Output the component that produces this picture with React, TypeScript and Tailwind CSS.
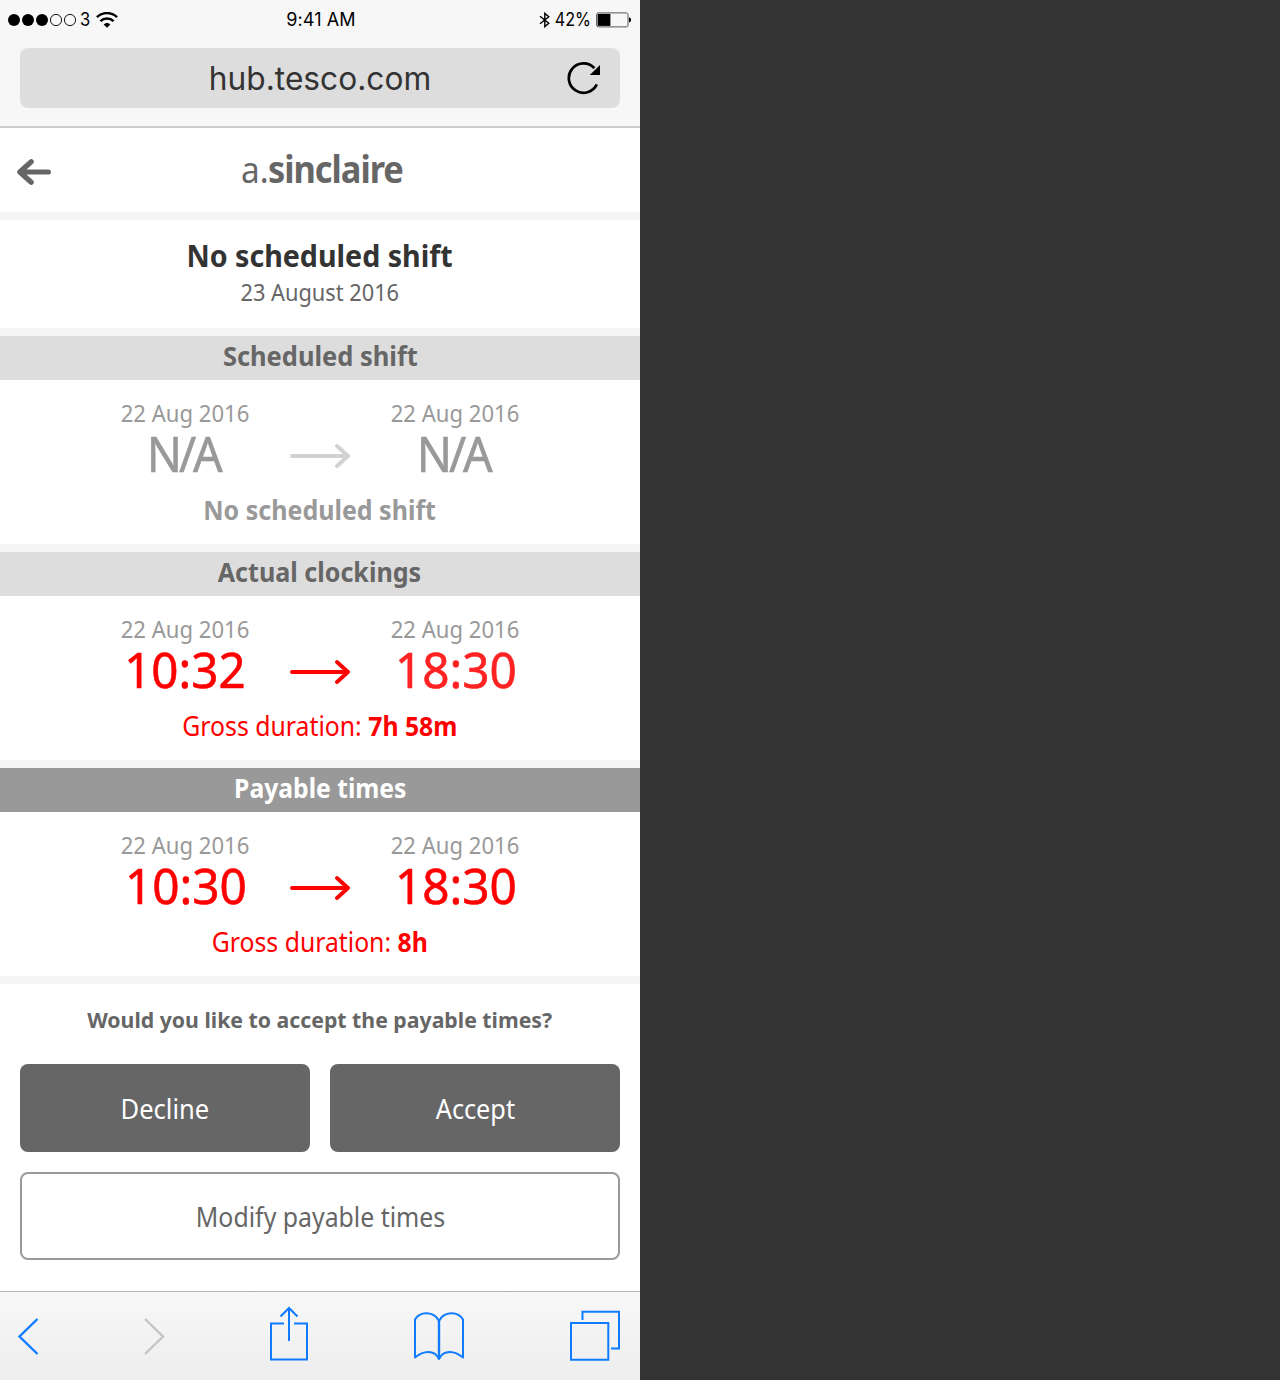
import type { ReactNode } from "react";

const NOTO = "font-['Noto_Sans',sans-serif]";

function Fit({ className, children }: { className: string; children: ReactNode }) {
  return <span className={`inline-block whitespace-pre ${className}`}>{children}</span>;
}

function StatusBar() {
  return (
    <div className="flex h-10 items-center justify-between pr-2 pl-2 font-[Inter,sans-serif] text-[18px] leading-10 text-black">
      <div className="flex w-[200px] items-center">
        <svg width="69" height="14" viewBox="0 0 69 14">
          <circle cx="6" cy="7" r="6" />
          <circle cx="20" cy="7" r="6" />
          <circle cx="34" cy="7" r="6" />
          <circle cx="48" cy="7" r="5.6" fill="none" stroke="#000" strokeWidth="0.9" />
          <circle cx="62" cy="7" r="5.6" fill="none" stroke="#000" strokeWidth="0.9" />
        </svg>
        <Fit className="ml-[3px] w-[11px] origin-left scale-x-[0.92]">3</Fit>
        <svg className="ml-[5px]" width="22" height="16" viewBox="0 0 22 16" fill="none" stroke="#000">
          <path d="M0.9 5.2C6.5 -0.3 15.5 -0.3 21.1 5.2" strokeWidth="2.5" />
          <path d="M4.4 9.2C8.2 5.5 13.8 5.5 17.6 9.2" strokeWidth="2.4" />
          <path d="M11 15.8L7.6 12.6C9.5 10.5 12.5 10.5 14.4 12.6Z" fill="#000" stroke="none" />
        </svg>
      </div>
      <Fit className="pl-[2px] tracking-[0.1px]">9:41 AM</Fit>
      <div className="flex w-[200px] items-center justify-end">
        <svg width="11" height="16" viewBox="0 0 11 16" fill="none" stroke="#000" strokeWidth="1.4">
          <path d="M1 4.2L9.8 11.2L5.8 14.6V1.4L9.8 4.8L1 11.8" />
        </svg>
        <Fit className="ml-[4px] w-[42px] origin-left scale-x-[0.9]">42%</Fit>
        <svg width="36" height="16" viewBox="0 0 36 16">
          <rect x="0.6" y="0.9" width="31.4" height="14" rx="1.8" fill="none" stroke="#444" strokeWidth="0.9" />
          <rect x="1.6" y="1.9" width="12.8" height="12" />
          <path d="M33 5.3C35.8 6 35.8 9.8 33 10.5Z" />
        </svg>
      </div>
    </div>
  );
}

function Browser() {
  return (
    <div className="h-32 border-b-2 border-[#ccc] bg-[#f7f7f7]">
      <StatusBar />
      <div className="mx-5 mt-2 grid h-[60px] grid-cols-[80px_1fr_80px] items-center rounded-lg bg-[#ddd]">
        <span />
        <Fit className="scale-x-[0.99] pt-[2px] text-center font-[Inter,sans-serif] text-[32px] leading-[58px] text-[#333]">hub.tesco.com</Fit>
        <svg className="ml-[27px]" width="34" height="34" viewBox="0 0 34 34" fill="none">
          <path d="M29.8 23.4A14.7 14.7 0 1 1 27.4 7.2" stroke="#000" strokeWidth="2.7" />
          <path d="M33 4V14H22.8Z" fill="#000" />
        </svg>
      </div>
    </div>
  );
}

function Arrow({ className }: { className: string }) {
  return (
    <svg className={className} width="60" height="26" viewBox="0 0 60 26" fill="none" stroke="currentColor" strokeWidth="3.8" strokeLinecap="round" strokeLinejoin="round">
      <path d="M2 13H58M47 3L58 13L47 23" />
    </svg>
  );
}

function Time({ value, className }: { value: string; className: string }) {
  return (
    <div className="flex flex-col items-center">
      <Fit className="scale-x-[0.96] text-[23px] leading-6 text-[#999]">22 Aug 2016</Fit>
      <Fit className={`mt-[3px] text-[50px] leading-[50px] [-webkit-text-stroke:0.6px_currentColor] ${className}`}>{value}</Fit>
    </div>
  );
}

interface SectionProps {
  title: ReactNode;
  header: string;
  start: string;
  end: string;
  startClass: string;
  endClass: string;
  arrowClass: string;
  children: ReactNode;
}

function Section(p: SectionProps) {
  return (
    <section className="flex h-[216px] flex-col items-center border-b-8 border-[#f5f5f5]">
      <h2 className={`flex h-11 w-full justify-center text-[27px] leading-[40px] font-bold ${p.header}`}>{p.title}</h2>
      <div className="mt-[21px] grid grid-cols-[150px_120px_150px]">
        <Time value={p.start} className={p.startClass} />
        <Arrow className={`mt-[42px] justify-self-center ${p.arrowClass}`} />
        <Time value={p.end} className={p.endClass} />
      </div>
      <div className="mt-[14px] text-[27px] leading-[36px]">{p.children}</div>
    </section>
  );
}

function Toolbar() {
  return (
    <nav className="flex h-[89px] items-start justify-between border-t border-[#b2b2b2] bg-gradient-to-b from-[#f8f8f8] to-[#ededed] pr-[18px] pl-[17px] pt-[14px] text-[#0f7cff]">
      <svg width="22" height="60" viewBox="0 0 22 60" fill="none" stroke="currentColor" strokeWidth="2.4">
        <path d="M20.5 13L2.5 30.5L20.5 48" />
      </svg>
      <svg width="22" height="60" viewBox="0 0 22 60" fill="none" stroke="#c4c4c4" strokeWidth="2.4">
        <path d="M1 13L19 30.5L1 48" />
      </svg>
      <svg className="-ml-[2px]" width="40" height="60" viewBox="0 0 40 60" fill="none" stroke="currentColor" strokeWidth="2">
        <path d="M15 17.5H2V53.5H38V17.5H25" />
        <path d="M20 35V3M11.5 10.5L20 2L28.5 10.5" />
      </svg>
      <svg className="-ml-[1px]" width="52" height="60" viewBox="0 0 52 60" fill="none" stroke="currentColor" strokeWidth="2" strokeLinejoin="round">
        <path d="M26 15C21 5 7 5 2 13.5V51.5C10 45 21 43 26 53C31 43 42 45 50 51.5V13.5C45 5 31 5 26 15Z" />
        <path d="M26 15V53" strokeWidth="2.4" />
      </svg>
      <svg width="52" height="60" viewBox="0 0 52 60" fill="none" stroke="currentColor" strokeWidth="2">
        <path d="M1 17H38.3V53.8H1Z" />
        <path d="M12.5 14V5.7H49V42.5H41" />
      </svg>
    </nav>
  );
}

export default function App() {
  return (
    <div className="h-[1380px] w-full bg-[#333]">
      <div className={`w-[640px] bg-white text-center ${NOTO}`}>
        <Browser />
        <header className="grid h-[92px] grid-cols-[80px_1fr_80px] border-b-8 border-[#f5f5f5] text-[#666]">
          <svg className="mt-[30px] ml-4" width="36" height="28" viewBox="0 0 36 28" fill="none" stroke="currentColor" strokeWidth="5.2" strokeLinecap="round" strokeLinejoin="round">
            <path d="M32.4 14H4M15.2 3.8L3.8 14L15.2 24.2" />
          </svg>
          <h1 className="flex justify-center pl-[4px] text-[37px] leading-[82px]">
            <Fit className="w-[27px] origin-left scale-x-[0.9]">a.</Fit>
            <Fit className="w-[135px] origin-left scale-x-[0.93] font-bold tracking-[-1.1px]">sinclaire</Fit>
          </h1>
        </header>
        <div className="flex h-[116px] flex-col items-center border-b-8 border-[#f5f5f5] pt-4">
          <Fit className="scale-x-[0.954] text-[30px] leading-[39px] font-bold text-[#333]">No scheduled shift</Fit>
          <Fit className="mt-[4px] scale-x-[0.947] text-[23px] leading-[26px] text-[#666]">23 August 2016</Fit>
        </div>
        <Section
          title={<Fit className="scale-x-[0.943]">Scheduled shift</Fit>}
          header="bg-[#ddd] text-[#666]"
          start="N/A"
          end="N/A"
          startClass="mr-[3px] text-[#999] tracking-[-3.4px] scale-x-[0.93]"
          endClass="mr-[3px] text-[#999] tracking-[-3.4px] scale-x-[0.93]"
          arrowClass="text-[#d2d2d2]"
        >
          <Fit className="scale-x-[0.926] font-bold text-[#999]">No scheduled shift</Fit>
        </Section>
        <Section
          title={<Fit className="mr-[1px] scale-x-[0.93]">Actual clockings</Fit>}
          header="bg-[#ddd] text-[#666]"
          start="10:32"
          end="18:30"
          startClass="text-[#f00] scale-x-[0.95]"
          endClass="ml-[2px] text-[#ff2222] scale-x-[0.955]"
          arrowClass="text-[#f00]"
        >
          <Fit className="scale-x-[0.918] text-[#f00]">Gross duration: <b>7h 58m</b></Fit>
        </Section>
        <Section
          title={<Fit className="scale-x-[0.914]">Payable times</Fit>}
          header="bg-[#999] text-white"
          start="10:30"
          end="18:30"
          startClass="ml-[2px] text-[#f00] scale-x-[0.955]"
          endClass="ml-[2px] text-[#f00] scale-x-[0.955]"
          arrowClass="text-[#f00]"
        >
          <Fit className="scale-x-[0.917] text-[#f00]">Gross duration: <b>8h</b></Fit>
        </Section>
        <div className="h-[307px] px-5 pt-5">
          <p className="flex justify-center">
            <Fit className="mr-[1px] scale-x-[0.966] text-[22px] leading-[31px] font-bold text-[#666]">Would you like to accept the payable times?</Fit>
          </p>
          <div className="mt-[29px] grid grid-cols-2 gap-5 text-[27px] leading-[87px]">
            <button className="h-[88px] rounded-lg bg-[#666] text-white"><Fit className="scale-x-[0.945]">Decline</Fit></button>
            <button className="h-[88px] rounded-lg bg-[#666] text-white"><Fit className="scale-x-[0.935]">Accept</Fit></button>
            <button className="col-span-2 h-[88px] rounded-lg border-2 border-[#999] leading-[83px] text-[#666]">
              <Fit className="ml-[1px] scale-x-[0.92]">Modify payable times</Fit>
            </button>
          </div>
        </div>
        <Toolbar />
      </div>
    </div>
  );
}
